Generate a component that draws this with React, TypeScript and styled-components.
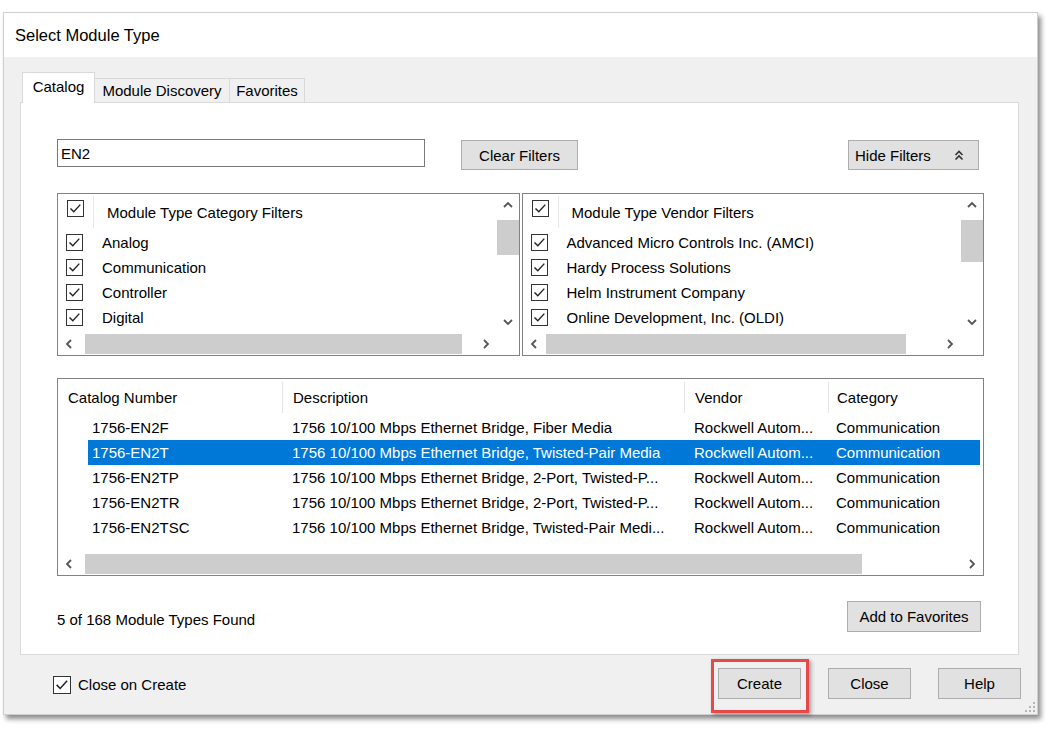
import React from "react";
import styled, { createGlobalStyle } from "styled-components";

const CATEGORY_FILTERS = ["Analog", "Communication", "Controller", "Digital"];
const VENDOR_FILTERS = [
  "Advanced Micro Controls Inc. (AMCI)",
  "Hardy Process Solutions",
  "Helm Instrument Company",
  "Online Development, Inc. (OLDI)",
];
const MODULES = [
  {
    no: "1756-EN2F",
    desc: "1756 10/100 Mbps Ethernet Bridge, Fiber Media",
    vendor: "Rockwell Autom...",
    cat: "Communication",
  },
  {
    no: "1756-EN2T",
    desc: "1756 10/100 Mbps Ethernet Bridge, Twisted-Pair Media",
    vendor: "Rockwell Autom...",
    cat: "Communication",
    selected: true,
  },
  {
    no: "1756-EN2TP",
    desc: "1756 10/100 Mbps Ethernet Bridge, 2-Port, Twisted-P...",
    vendor: "Rockwell Autom...",
    cat: "Communication",
  },
  {
    no: "1756-EN2TR",
    desc: "1756 10/100 Mbps Ethernet Bridge, 2-Port, Twisted-P...",
    vendor: "Rockwell Autom...",
    cat: "Communication",
  },
  {
    no: "1756-EN2TSC",
    desc: "1756 10/100 Mbps Ethernet Bridge, Twisted-Pair Medi...",
    vendor: "Rockwell Autom...",
    cat: "Communication",
  },
];

const GlobalStyle = createGlobalStyle`
  * { box-sizing: border-box; }
  html, body { margin: 0; padding: 0; background: #ffffff; }
  body {
    font-family: "Liberation Sans", Arial, sans-serif;
    font-size: 15px;
    color: #000;
  }
`;

// small drawings
const Chevron = ({ dir }: { dir: "up" | "down" | "left" | "right" }) => {
  const pts: any = {
    up: "1,6 5,2 9,6",
    down: "1,2 5,6 9,2",
    left: "6,1 2,5 6,9",
    right: "2,1 6,5 2,9",
  };
  const vertical = dir === "up" || dir === "down";
  return (
    <svg
      width={vertical ? 10 : 8}
      height={vertical ? 8 : 10}
      viewBox={vertical ? "0 0 10 8" : "0 0 8 10"}
    >
      <polyline points={pts[dir]} fill="none" stroke="#555" strokeWidth="1.8" />
    </svg>
  );
};

const DoubleUp = () => (
  <svg width="10" height="11" viewBox="0 0 10 11">
    <polyline points="1.5,5 5,1.5 8.5,5" fill="none" stroke="#333" strokeWidth="1.6" />
    <polyline points="1.5,9.5 5,6 8.5,9.5" fill="none" stroke="#333" strokeWidth="1.6" />
  </svg>
);

const Check = ({ size = 17 }: { size?: number }) => (
  <CheckBox $size={size}>
    <svg width={size - 2} height={size - 2} viewBox="0 0 15 15">
      <polyline points="2.5,7.4 5.8,10.8 12.3,3.6" fill="none" stroke="#222" strokeWidth="1.4" />
    </svg>
  </CheckBox>
);

const Grip = () => (
  <svg width="11" height="11" viewBox="0 0 11 11">
    {[
      [9, 1],
      [9, 5],
      [5, 5],
      [9, 9],
      [5, 9],
      [1, 9],
    ].map(([x, y], i) => (
      <rect key={i} x={x} y={y} width="2" height="2" fill="#b5b5b5" />
    ))}
  </svg>
);

const HBar = ({ offset, width }: { offset: number; width: number }) => (
  <HScroll>
    <ArrowCell>
      <Chevron dir="left" />
    </ArrowCell>
    <HTrack>
      <HThumb style={{ marginLeft: offset, width }} />
    </HTrack>
    <ArrowCell>
      <Chevron dir="right" />
    </ArrowCell>
  </HScroll>
);

const FilterBox = ({
  title,
  items,
  vThumb,
  hThumb,
}: {
  title: string;
  items: string[];
  vThumb: number;
  hThumb: [number, number];
}) => (
  <FilterList>
    <FilterContent>
      <FilterHeader>
        <HeaderCheckCell>
          <Check />
        </HeaderCheckCell>
        <HeaderTitle>{title}</HeaderTitle>
      </FilterHeader>
      {items.map((i) => (
        <FilterItem key={i}>
          <Check />
          <span>{i}</span>
        </FilterItem>
      ))}
    </FilterContent>
    <VScroll>
      <ArrowCell>
        <Chevron dir="up" />
      </ArrowCell>
      <VTrack>
        <VThumb style={{ marginTop: 4, height: vThumb }} />
      </VTrack>
      <ArrowCell>
        <Chevron dir="down" />
      </ArrowCell>
    </VScroll>
    <HBar offset={hThumb[0]} width={hThumb[1]} />
    <Corner />
  </FilterList>
);

const App = () => {
  return (
    <Page>
      <GlobalStyle />
      <Window>
        <TitleBar>Select Module Type</TitleBar>
        <Body>
          <TabStrip>
            <Tab $active $w={73}>
              Catalog
            </Tab>
            <Tab $w={136}>Module Discovery</Tab>
            <Tab $w={76}>Favorites</Tab>
          </TabStrip>
          <TabPanel>
            <SearchRow>
              <SearchInput defaultValue="EN2" />
              <Button $w={117} $h={30} style={{ marginLeft: 36 }}>
                Clear Filters
              </Button>
              <HideButton>
                Hide Filters
                <DoubleUp />
              </HideButton>
            </SearchRow>
            <FiltersRow>
              <FilterBox
                title="Module Type Category Filters"
                items={CATEGORY_FILTERS}
                vThumb={35}
                hThumb={[5, 377]}
              />
              <FilterBox
                title="Module Type Vendor Filters"
                items={VENDOR_FILTERS}
                vThumb={42}
                hThumb={[1, 360]}
              />
            </FiltersRow>
            <Table>
              <TableHead>
                <HeadCell>Catalog Number</HeadCell>
                <HeadCell $sep>Description</HeadCell>
                <HeadCell $sep>Vendor</HeadCell>
                <HeadCell $sep $pad={8}>
                  Category
                </HeadCell>
              </TableHead>
              <TableBody>
                {MODULES.map((m) => (
                  <TableRow key={m.no} $selected={m.selected}>
                    <Cell $pad={4}>{m.no}</Cell>
                    <Cell>{m.desc}</Cell>
                    <Cell>{m.vendor}</Cell>
                    <Cell $pad={8}>{m.cat}</Cell>
                  </TableRow>
                ))}
              </TableBody>
              <HBar offset={5} width={777} />
            </Table>
            <StatusRow>
              <StatusText>5 of 168 Module Types Found</StatusText>
              <Button $w={134} $h={31} style={{ marginRight: 3 }}>
                Add to Favorites
              </Button>
            </StatusRow>
          </TabPanel>
        </Body>
        <Footer>
          <CloseOnCreate>
            <Check size={18} />
            Close on Create
          </CloseOnCreate>
          <FooterButtons>
            <Highlight>
              <Button $w={83} $h={31}>
                Create
              </Button>
            </Highlight>
            <Button $w={83} $h={31}>
              Close
            </Button>
            <Button $w={83} $h={31}>
              Help
            </Button>
          </FooterButtons>
        </Footer>
        <GripCorner>
          <Grip />
        </GripCorner>
      </Window>
    </Page>
  );
};

const Page = styled.div`
  width: 1048px;
  height: 736px;
  padding: 12px 0 0 3px;
`;
const Window = styled.div`
  position: relative;
  width: 1035px;
  height: 703px;
  background-color: #f0f0f0;
  border: 1px solid #cfcfcf;
  box-shadow: 3px 4px 5px rgba(0, 0, 0, 0.45);
  display: flex;
  flex-direction: column;
`;
const TitleBar = styled.div`
  height: 44px;
  background-color: #ffffff;
  padding: 1px 11px 0;
  display: flex;
  align-items: center;
  font-size: 16.5px;
  flex: none;
`;
const Body = styled.div`
  padding: 16px 18px 0 16px;
  display: flex;
  flex-direction: column;
  flex: none;
`;
const TabStrip = styled.div`
  display: flex;
  align-items: flex-end;
  height: 30px;
  padding-left: 2px;
  position: relative;
  z-index: 1;
  margin-bottom: -1px;
`;
const Tab = styled.div<{ $active?: boolean; $w: number }>`
  width: ${(p) => p.$w}px;
  height: ${(p) => (p.$active ? 31 : 25)}px;
  background-color: ${(p) => (p.$active ? "#ffffff" : "#f0f0f0")};
  border: 1px solid #d9d9d9;
  border-bottom: ${(p) => (p.$active ? "none" : "1px solid #d9d9d9")};
  margin-left: ${(p) => (p.$active ? 0 : -1)}px;
  display: flex;
  align-items: center;
  justify-content: center;
  padding-bottom: ${(p) => (p.$active ? 3 : 0)}px;
  white-space: nowrap;
`;
const TabPanel = styled.div`
  height: 553px;
  background-color: #ffffff;
  border: 1px solid #d9d9d9;
  padding: 36px 34px 0 36px;
  display: flex;
  flex-direction: column;
`;
const SearchRow = styled.div`
  display: flex;
  align-items: center;
  height: 32px;
`;
const SearchInput = styled.input`
  width: 368px;
  height: 28px;
  border: 1px solid #7a7a7a;
  padding: 0 3px;
  font-family: "Liberation Sans", Arial, sans-serif;
  font-size: 15px;
  outline: none;
  margin-top: -4px;
`;
const Button = styled.div<{ $w: number; $h: number }>`
  width: ${(p) => p.$w}px;
  height: ${(p) => p.$h}px;
  background-color: #e1e1e1;
  border: 1px solid #adadad;
  display: flex;
  align-items: center;
  justify-content: center;
  white-space: nowrap;
  flex: none;
`;
const HideButton = styled.div`
  margin-left: auto;
  margin-right: 5px;
  width: 131px;
  height: 30px;
  background-color: #e1e1e1;
  border: 1px solid #adadad;
  display: flex;
  align-items: center;
  justify-content: space-between;
  padding: 0 14px 0 6px;
`;
const FiltersRow = styled.div`
  margin-top: 22px;
  height: 163px;
  display: flex;
  gap: 2px;
`;
const FilterList = styled.div`
  flex: 1;
  border: 1px solid #828282;
  background-color: #ffffff;
  display: grid;
  grid-template-columns: 1fr 22px;
  grid-template-rows: 1fr 22px;
  overflow: hidden;
`;
const FilterContent = styled.div`
  overflow: hidden;
  display: flex;
  flex-direction: column;
`;
const FilterHeader = styled.div`
  height: 36px;
  display: flex;
  flex: none;
`;
const HeaderCheckCell = styled.div`
  width: 36px;
  padding: 4px 0 0 9px;
  border-right: 1px solid #e8e8e8;
  margin: 2px 0 2px 0;
`;
const HeaderTitle = styled.div`
  display: flex;
  align-items: center;
  padding-left: 13px;
  padding-top: 1px;
  white-space: nowrap;
`;
const FilterItem = styled.div`
  height: 25px;
  display: flex;
  align-items: center;
  gap: 19px;
  padding-left: 8px;
  white-space: nowrap;
  flex: none;
`;
const CheckBox = styled.div<{ $size: number }>`
  width: ${(p) => p.$size}px;
  height: ${(p) => p.$size}px;
  border: 1px solid #333333;
  background-color: #ffffff;
  display: flex;
  align-items: center;
  justify-content: center;
  flex: none;
`;
const VScroll = styled.div`
  display: flex;
  flex-direction: column;
  background-color: #ffffff;
`;
const HScroll = styled.div`
  display: flex;
  background-color: #ffffff;
  height: 22px;
  flex: none;
`;
const ArrowCell = styled.div`
  width: 22px;
  height: 22px;
  display: flex;
  align-items: center;
  justify-content: center;
  flex: none;
`;
const VTrack = styled.div`
  flex: 1;
  display: flex;
  flex-direction: column;
`;
const VThumb = styled.div`
  width: 100%;
  background-color: #cdcdcd;
`;
const HTrack = styled.div`
  flex: 1;
  display: flex;
  padding: 1px 0;
`;
const HThumb = styled.div`
  height: 100%;
  background-color: #cdcdcd;
`;
const Corner = styled.div`
  background-color: #ffffff;
`;
const Table = styled.div`
  margin-top: 22px;
  height: 198px;
  border: 1px solid #828282;
  background-color: #ffffff;
  display: flex;
  flex-direction: column;
`;
const TableHead = styled.div`
  height: 36px;
  display: grid;
  grid-template-columns: 224px 402px 144px 1fr;
  flex: none;
`;
const HeadCell = styled.div<{ $sep?: boolean; $pad?: number }>`
  display: flex;
  align-items: center;
  padding-left: ${(p) => p.$pad ?? 10}px;
  border-left: ${(p) => (p.$sep ? "1px solid #e5e5e5" : "none")};
  margin: 3px 0 2px;
  white-space: nowrap;
`;
const TableBody = styled.div`
  flex: 1;
  display: flex;
  flex-direction: column;
`;
const TableRow = styled.div<{ $selected?: boolean }>`
  height: 25px;
  margin: 0 3px 0 30px;
  display: grid;
  grid-template-columns: 194px 402px 144px 1fr;
  background-color: ${(p) => (p.$selected ? "#0078d7" : "transparent")};
  color: ${(p) => (p.$selected ? "#ffffff" : "#000000")};
`;
const Cell = styled.div<{ $pad?: number }>`
  display: flex;
  align-items: center;
  padding-left: ${(p) => p.$pad ?? 10}px;
  white-space: nowrap;
  overflow: hidden;
`;
const StatusRow = styled.div`
  margin-top: 25px;
  height: 31px;
  display: flex;
  align-items: center;
  justify-content: space-between;
`;
const StatusText = styled.span`
  padding-top: 5px;
`;
const Footer = styled.div`
  flex: 1;
  display: flex;
  align-items: center;
  justify-content: space-between;
  padding: 0 16px 3px 49px;
`;
const CloseOnCreate = styled.div`
  display: flex;
  align-items: center;
  gap: 7px;
  padding-top: 3px;
  white-space: nowrap;
`;
const FooterButtons = styled.div`
  display: flex;
  gap: 27px;
`;
const Highlight = styled.div`
  position: relative;
  &::after {
    content: "";
    position: absolute;
    top: -9px;
    left: -7px;
    right: -8px;
    bottom: -14px;
    border: 3px solid #e94848;
    box-shadow: 2px 2px 4px rgba(0, 0, 0, 0.35);
  }
`;
const GripCorner = styled.div`
  position: absolute;
  right: 2px;
  bottom: 2px;
  display: flex;
`;

export default App;
